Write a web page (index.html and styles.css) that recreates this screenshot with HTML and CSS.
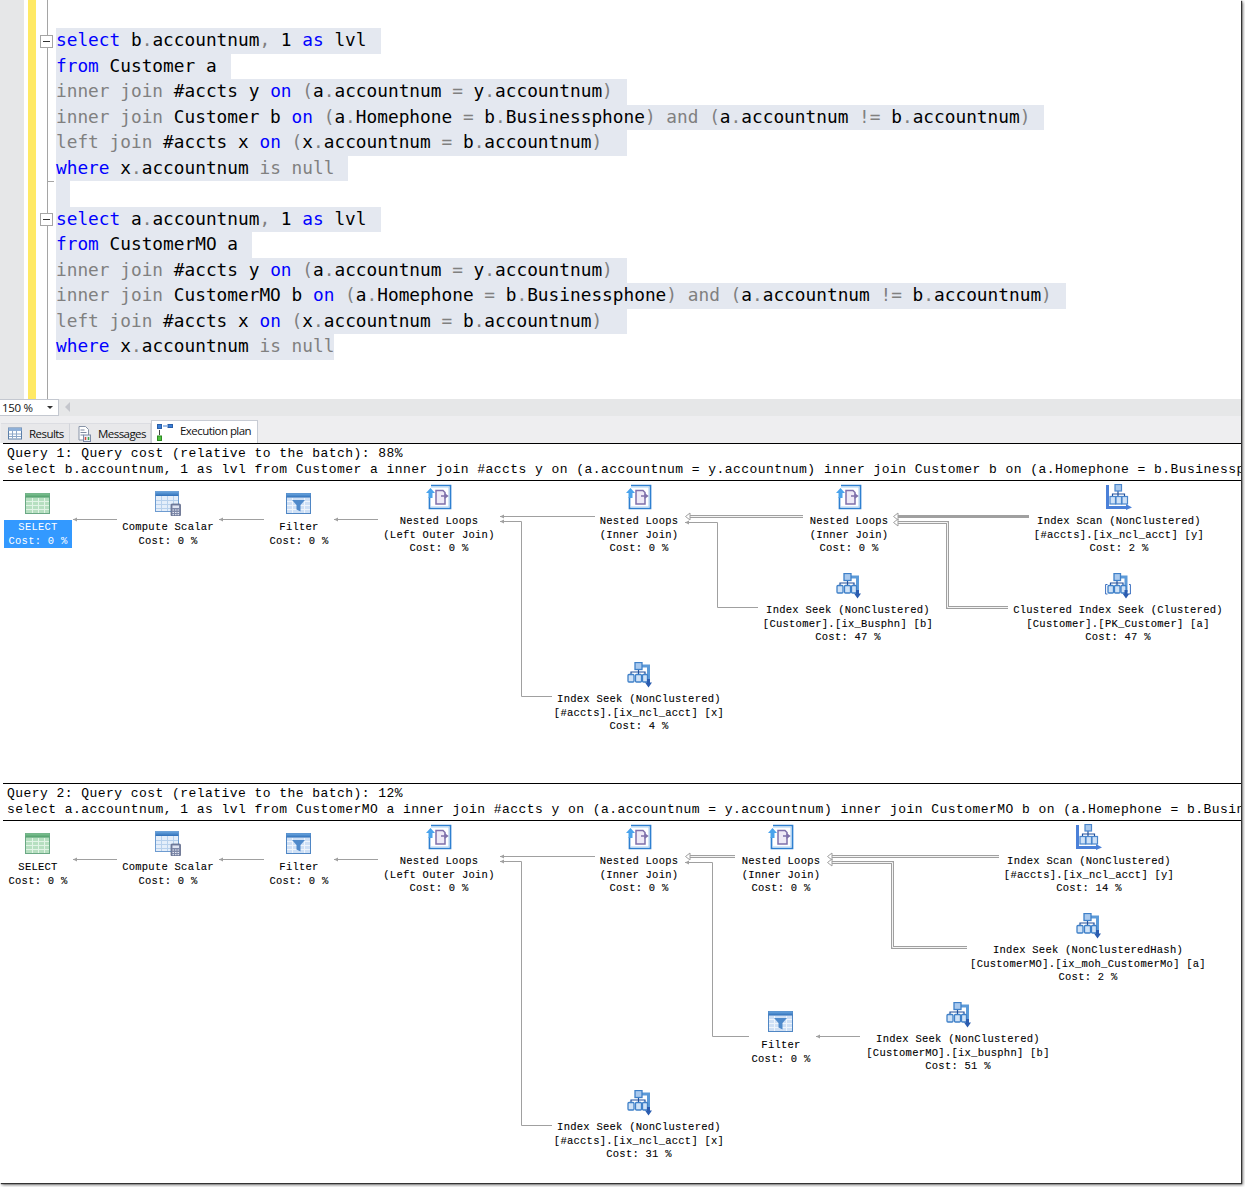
FILE: index.html
```html
<!DOCTYPE html>
<html lang="en">
<head>
<meta charset="utf-8">
<title>Execution plan</title>
<link rel="stylesheet" href="styles.css">
</head>
<body>
<svg class="defs" width="0" height="0" aria-hidden="true">
  <defs>
    <marker id="ah" markerWidth="5" markerHeight="5" refX="0" refY="2.5" orient="0" markerUnits="userSpaceOnUse"><path d="M0 2.500 4 .5V4.500Z" fill="#a0a0a0"/></marker>
    <marker id="aw" markerWidth="7" markerHeight="9" refX="0" refY="4.5" orient="0" markerUnits="userSpaceOnUse"><path d="M.5 4.500 5 1V8Z" fill="#fff" stroke="#a0a0a0"/></marker>
    <linearGradient id="gh" x1="0" y1="0" x2="0" y2="1"><stop offset="0" stop-color="#6aa6e0"/><stop offset="1" stop-color="#2f6fb8"/></linearGradient>
    <linearGradient id="gg" x1="0" y1="0" x2="0" y2="1"><stop offset="0" stop-color="#7fc492"/><stop offset="1" stop-color="#4f9c6b"/></linearGradient>
    <symbol id="i-select" viewBox="0 0 26 26">
      <rect x=".5" y="3.500" width="24" height="20" fill="#b6dfc0" stroke="#6aa884"/>
      <rect x=".5" y="3.500" width="24" height="4" fill="url(#gg)"/>
      <path d="M1 11.500H24M1 15.500H24M1 19.500H24M7.500 8V23M13.500 8V23M19.500 8V23" stroke="#e2f4e6" fill="none"/>
    </symbol>
    <symbol id="i-compute" viewBox="0 0 26 26">
      <rect x=".5" y="1.500" width="23" height="20" fill="#e4eefa" stroke="#6d9bd0"/>
      <rect x=".5" y="1.500" width="23" height="4.500" fill="url(#gh)"/>
      <path d="M1 10.500H23M1 14.500H23M1 18.500H23M6.500 6V21M12.500 6V21M18.500 6V21" stroke="#b7d0ec" fill="none"/>
      <rect x="16" y="14" width="9.500" height="12" rx="1" fill="#7d88a8" stroke="#555f80" stroke-width=".7"/>
      <rect x="17.500" y="15.500" width="6.500" height="2.500" fill="#dfe4f2"/>
      <path d="M17.500 20h1.500M20 20h1.500M22.500 20h1.500M17.500 22.500h1.500M20 22.500h1.500M22.500 22.500h1.500M17.500 24.700h1.500M20 24.700h1.500M22.500 24.700h1.500" stroke="#e8ebf5"/>
    </symbol>
    <symbol id="i-filter" viewBox="0 0 26 26">
      <rect x=".5" y="3.500" width="24" height="20" fill="#cfe0f5" stroke="#4f86c4"/>
      <rect x=".5" y="3.500" width="24" height="4" fill="url(#gh)"/>
      <path d="M1 11.500H24M1 15.500H24M1 19.500H24M6.500 8V23M18.500 8V23" stroke="#eff5fc" fill="none"/>
      <path d="M6 10H19L14.500 15V21.500L10.500 19.500V15Z" fill="#4f8acb"/>
    </symbol>
    <symbol id="i-loops" viewBox="0 0 26 26">
      <path d="M5 1.500H24.500V24.500H3.500V13" fill="#fff" stroke="#2e7fd0" stroke-width="1.700"/>
      <path d="M5 3H23V23H5" fill="none" stroke="#a9cef0"/>
      <path d="M0 9 4.500 4 9 9H6.500V14H2.500V9Z" fill="#4aa3ec"/>
      <path d="M10 6.500H17L19 8.500V20H10Z" fill="#efeaf6" stroke="#7f70aa" stroke-width="1.500"/>
      <path d="M15 12H21M18.500 9.800 21.500 12 18.500 14.200" fill="none" stroke="#7f70aa" stroke-width="1.400"/>
    </symbol>
    <symbol id="i-scan" viewBox="0 0 26 26">
      <path d="M1.500 1V23.500H21" fill="none" stroke="#4a80d8" stroke-width="3"/>
      <path d="M20 20 26 23.500 20 26Z" fill="#4a80d8"/>
      <path d="M12 7V10H6.500V13M12 10H18.500V13M12 10V13" fill="none" stroke="#1f4f9c" stroke-width="1.200"/>
      <rect x="9" y=".5" width="6.500" height="6.500" fill="#a9c9ee" stroke="#4a86cc" stroke-width="1.200"/>
      <rect x="4" y="12.500" width="5.500" height="7.500" fill="#cfe2f7" stroke="#4a86cc" stroke-width="1.200"/>
      <rect x="10" y="12.500" width="5.500" height="7.500" fill="#cfe2f7" stroke="#4a86cc" stroke-width="1.200"/>
      <rect x="16" y="12.500" width="5.500" height="7.500" fill="#cfe2f7" stroke="#4a86cc" stroke-width="1.200"/>
    </symbol>
    <symbol id="i-seek" viewBox="0 0 26 26">
      <path d="M15 4H22.500V19" fill="none" stroke="#5c9ad8" stroke-width="3"/>
      <path d="M12.500 7V10H5V13M12.500 10H19V13M12.500 10V13" fill="none" stroke="#1f4f9c" stroke-width="1.200"/>
      <rect x="9" y=".5" width="7" height="7" fill="#a9c9ee" stroke="#3f80c8" stroke-width="1.300"/>
      <rect x="2" y="12.500" width="6" height="7.500" rx="1" fill="#cfe2f7" stroke="#3f80c8" stroke-width="1.300"/>
      <rect x="9.500" y="12.500" width="6" height="7.500" rx="1" fill="#cfe2f7" stroke="#3f80c8" stroke-width="1.300"/>
      <rect x="16.500" y="12.500" width="5" height="7.500" rx="1" fill="#cfe2f7" stroke="#3f80c8" stroke-width="1.300"/>
      <path d="M21 17H24V20.500H26L22.500 25.500 19 20.500H21Z" fill="#2a5cb0"/>
    </symbol>
    <symbol id="i-cseek" viewBox="0 0 26 26">
      <path d="M2.500 11.500H.6V21H2.500M24 11.500H25.400V21H24" fill="none" stroke="#3b6fc0"/>
      <path d="M15 4H21V19" fill="none" stroke="#5c9ad8" stroke-width="3"/>
      <path d="M12 7V10H5.500V13M12 10H18V13M12 10V13" fill="none" stroke="#1f4f9c" stroke-width="1.200"/>
      <rect x="9" y=".5" width="6.500" height="7" fill="#a9c9ee" stroke="#3f80c8" stroke-width="1.300"/>
      <rect x="3" y="12.500" width="5.500" height="7.500" rx="1" fill="#cfe2f7" stroke="#3f80c8" stroke-width="1.300"/>
      <rect x="9.500" y="12.500" width="5.500" height="7.500" rx="1" fill="#cfe2f7" stroke="#3f80c8" stroke-width="1.300"/>
      <rect x="16" y="12.500" width="5" height="7.500" rx="1" fill="#cfe2f7" stroke="#3f80c8" stroke-width="1.300"/>
      <path d="M19.500 17H22.500V20.500H24.500L21 25.500 17.500 20.500H19.500Z" fill="#2a5cb0"/>
    </symbol>
  </defs>
</svg>

<main class="window">
  <section class="editor">
    <div class="margin"></div>
    <div class="spacer"></div>
    <div class="changes"></div>
    <div class="folds">
      <span class="fold-box fold-a"></span>
      <span class="fold-end"></span>
      <span class="fold-box fold-b"></span>
    </div>
    <div class="code">
      <div class="row"><span class="sel nl"><span class="k">select</span> b<span class="g">.</span>accountnum<span class="g">,</span> 1 <span class="k">as</span> lvl</span></div>
      <div class="row"><span class="sel nl"><span class="k">from</span> Customer a</span></div>
      <div class="row"><span class="sel nl"><span class="g">inner join</span> #accts y <span class="k">on</span> <span class="g">(</span>a<span class="g">.</span>accountnum <span class="g">=</span> y<span class="g">.</span>accountnum<span class="g">)</span></span></div>
      <div class="row"><span class="sel nl"><span class="g">inner join</span> Customer b <span class="k">on</span> <span class="g">(</span>a<span class="g">.</span>Homephone <span class="g">=</span> b<span class="g">.</span>Businessphone<span class="g">) and (</span>a<span class="g">.</span>accountnum <span class="g">!=</span> b<span class="g">.</span>accountnum<span class="g">)</span></span></div>
      <div class="row"><span class="sel nl"><span class="g">left join</span> #accts x <span class="k">on</span> <span class="g">(</span>x<span class="g">.</span>accountnum <span class="g">=</span> b<span class="g">.</span>accountnum<span class="g">) </span></span></div>
      <div class="row"><span class="sel nl"><span class="k">where</span> x<span class="g">.</span>accountnum <span class="g">is null</span></span></div>
      <div class="row"><span class="sel nl"></span></div>
      <div class="row"><span class="sel nl"><span class="k">select</span> a<span class="g">.</span>accountnum<span class="g">,</span> 1 <span class="k">as</span> lvl</span></div>
      <div class="row"><span class="sel nl"><span class="k">from</span> CustomerMO a</span></div>
      <div class="row"><span class="sel nl"><span class="g">inner join</span> #accts y <span class="k">on</span> <span class="g">(</span>a<span class="g">.</span>accountnum <span class="g">=</span> y<span class="g">.</span>accountnum<span class="g">)</span></span></div>
      <div class="row"><span class="sel nl"><span class="g">inner join</span> CustomerMO b <span class="k">on</span> <span class="g">(</span>a<span class="g">.</span>Homephone <span class="g">=</span> b<span class="g">.</span>Businessphone<span class="g">) and (</span>a<span class="g">.</span>accountnum <span class="g">!=</span> b<span class="g">.</span>accountnum<span class="g">)</span></span></div>
      <div class="row"><span class="sel nl"><span class="g">left join</span> #accts x <span class="k">on</span> <span class="g">(</span>x<span class="g">.</span>accountnum <span class="g">=</span> b<span class="g">.</span>accountnum<span class="g">) </span></span></div>
      <div class="row"><span class="sel"><span class="k">where</span> x<span class="g">.</span>accountnum <span class="g">is null</span></span></div>
    </div>
  </section>

  <div class="statusbar">
    <div class="zoom-box"><span>150 %</span><span class="caret"></span></div>
    <span class="scroll-left"></span>
  </div>

  <nav class="tabs">
    <div class="tab tab-results">
      <svg class="tab-icon" viewBox="0 0 14 14"><rect x=".5" y="1.500" width="13" height="11" fill="#fff" stroke="#5c7fa8"/><rect x=".5" y="1.500" width="13" height="3" fill="#8fb0d8"/><path d="M1 7.500H13M1 10H13M4.500 4V12M8.500 4V12" stroke="#8ea8c8"/></svg>
      <span>Results</span>
    </div>
    <div class="tab tab-messages">
      <svg class="tab-icon" viewBox="0 0 14 16"><path d="M1.500.5H8L11 3.500V14H1.500Z" fill="#fff" stroke="#8894a8"/><path d="M3 4H7M3 6.500H9M3 9H6" stroke="#7f8aa0"/><rect x="6" y="9" width="7" height="6.500" fill="#e9edf4" stroke="#7d8aa5"/><path d="M8 11v3" stroke="#d64a3a" stroke-width="1.500"/><path d="M11 11v3" stroke="#3fa34d" stroke-width="1.500"/></svg>
      <span>Messages</span>
    </div>
    <div class="tab tab-plan">
      <svg class="tab-icon plan-icon" viewBox="0 0 16 20"><rect x=".5" y="2.500" width="4" height="4" fill="#3a7fd8" stroke="#2a5fa8"/><rect x="11" y="2.500" width="4.500" height="3" fill="#3a7fd8" stroke="#2a5fa8"/><path d="M6 4H10" stroke="#3a7fd8"/><path d="M2.500 8V13" stroke="#444"/><rect x=".5" y="14" width="4" height="4.500" fill="#4fc23e" stroke="#2f8a25"/></svg>
      <span>Execution plan</span>
    </div>
  </nav>

  <section class="plan">
    <header class="plan-head">
      <div>Query 1: Query cost (relative to the batch): 88%</div>
      <div>select b.accountnum, 1 as lvl from Customer a inner join #accts y on (a.accountnum = y.accountnum) inner join Customer b on (a.Homephone = b.Businessphone) and (a.accountnum != b.accountnum) left join #accts x on (x.accountnum = b.accountnum) where x.accountnum is null</div>
    </header>
    <div class="canvas canvas-one">
      <svg class="wires" viewBox="0 481 1241 302">
        <path class="wire" marker-start="url(#ah)" d="M73 519.500H117"/>
        <path class="wire" marker-start="url(#ah)" d="M219 519.500H264"/>
        <path class="wire" marker-start="url(#ah)" d="M334 519.500H378"/>
        <path class="wire" marker-start="url(#ah)" d="M500 516.500H595"/>
        <path class="wire" marker-start="url(#ah)" d="M500 521.500H521.500V696.500H552"/>
        <path class="wire wider" d="M689 516.500H803"/>
        <path class="wire inner" d="M689 516.500H803"/>
        <path class="wire arrow-only" marker-start="url(#aw)" d="M685 516.500H690"/>
        <path class="wire" marker-start="url(#ah)" d="M685 522.500H717.500V607.500H758"/>
        <path class="wire wider" d="M897 516.500H1029"/>
        <path class="wire arrow-only" marker-start="url(#aw)" d="M893 516.500H898"/>
        <path class="wire wider" d="M897 522.500H947.500V607.500H1008"/>
        <path class="wire inner" d="M897 522.500H947.500V607.500H1008"/>
        <path class="wire arrow-only" marker-start="url(#aw)" d="M893 522.500H898"/>
      </svg>
      <div class="node x38 a9"><svg class="ico"><use href="#i-select"/></svg><div class="label picked">SELECT<br>Cost: 0 %</div></div>
      <div class="node x168 a9"><svg class="ico"><use href="#i-compute"/></svg><div class="label">Compute Scalar<br>Cost: 0 %</div></div>
      <div class="node x299 a9"><svg class="ico"><use href="#i-filter"/></svg><div class="label">Filter<br>Cost: 0 %</div></div>
      <div class="node x439 a3"><svg class="ico"><use href="#i-loops"/></svg><div class="label">Nested Loops<br>(Left Outer Join)<br>Cost: 0 %</div></div>
      <div class="node x639 a3"><svg class="ico"><use href="#i-loops"/></svg><div class="label">Nested Loops<br>(Inner Join)<br>Cost: 0 %</div></div>
      <div class="node x849 a3"><svg class="ico"><use href="#i-loops"/></svg><div class="label">Nested Loops<br>(Inner Join)<br>Cost: 0 %</div></div>
      <div class="node x1119 a3"><svg class="ico"><use href="#i-scan"/></svg><div class="label">Index Scan (NonClustered)<br>[#accts].[ix_ncl_acct] [y]<br>Cost: 2 %</div></div>
      <div class="node x848 a92"><svg class="ico"><use href="#i-seek"/></svg><div class="label">Index Seek (NonClustered)<br>[Customer].[ix_Busphn] [b]<br>Cost: 47 %</div></div>
      <div class="node x1118 a92"><svg class="ico"><use href="#i-cseek"/></svg><div class="label">Clustered Index Seek (Clustered)<br>[Customer].[PK_Customer] [a]<br>Cost: 47 %</div></div>
      <div class="node x639 a181"><svg class="ico"><use href="#i-seek"/></svg><div class="label">Index Seek (NonClustered)<br>[#accts].[ix_ncl_acct] [x]<br>Cost: 4 %</div></div>
    </div>
  </section>

  <section class="plan">
    <header class="plan-head">
      <div>Query 2: Query cost (relative to the batch): 12%</div>
      <div>select a.accountnum, 1 as lvl from CustomerMO a inner join #accts y on (a.accountnum = y.accountnum) inner join CustomerMO b on (a.Homephone = b.Businessphone) and (a.accountnum != b.accountnum) left join #accts x on (x.accountnum = b.accountnum) where x.accountnum is null</div>
    </header>
    <div class="canvas canvas-two">
      <svg class="wires" viewBox="0 821 1241 362">
        <path class="wire" marker-start="url(#ah)" d="M73 859.500H117"/>
        <path class="wire" marker-start="url(#ah)" d="M219 859.500H264"/>
        <path class="wire" marker-start="url(#ah)" d="M334 859.500H378"/>
        <path class="wire" marker-start="url(#ah)" d="M500 856.500H595"/>
        <path class="wire" marker-start="url(#ah)" d="M500 861.500H521.500V1125.500H552"/>
        <path class="wire wider" d="M689 856.500H735"/>
        <path class="wire inner" d="M689 856.500H735"/>
        <path class="wire arrow-only" marker-start="url(#aw)" d="M685 856.500H690"/>
        <path class="wire" marker-start="url(#ah)" d="M685 862.500H712.500V1036.500H749"/>
        <path class="wire wider" d="M831 856.500H999"/>
        <path class="wire inner" d="M831 856.500H999"/>
        <path class="wire arrow-only" marker-start="url(#aw)" d="M827 856.500H832"/>
        <path class="wire wider" d="M831 862.500H892.500V947.500H967"/>
        <path class="wire inner" d="M831 862.500H892.500V947.500H967"/>
        <path class="wire arrow-only" marker-start="url(#aw)" d="M827 862.500H832"/>
        <path class="wire" marker-start="url(#ah)" d="M816 1036.500H860"/>
      </svg>
      <div class="node x38 a9"><svg class="ico"><use href="#i-select"/></svg><div class="label">SELECT<br>Cost: 0 %</div></div>
      <div class="node x168 a9"><svg class="ico"><use href="#i-compute"/></svg><div class="label">Compute Scalar<br>Cost: 0 %</div></div>
      <div class="node x299 a9"><svg class="ico"><use href="#i-filter"/></svg><div class="label">Filter<br>Cost: 0 %</div></div>
      <div class="node x439 a3"><svg class="ico"><use href="#i-loops"/></svg><div class="label">Nested Loops<br>(Left Outer Join)<br>Cost: 0 %</div></div>
      <div class="node x639 a3"><svg class="ico"><use href="#i-loops"/></svg><div class="label">Nested Loops<br>(Inner Join)<br>Cost: 0 %</div></div>
      <div class="node x781 a3"><svg class="ico"><use href="#i-loops"/></svg><div class="label">Nested Loops<br>(Inner Join)<br>Cost: 0 %</div></div>
      <div class="node x1089 a3"><svg class="ico"><use href="#i-scan"/></svg><div class="label">Index Scan (NonClustered)<br>[#accts].[ix_ncl_acct] [y]<br>Cost: 14 %</div></div>
      <div class="node x1088 a92"><svg class="ico"><use href="#i-seek"/></svg><div class="label">Index Seek (NonClusteredHash)<br>[CustomerMO].[ix_moh_CustomerMo] [a]<br>Cost: 2 %</div></div>
      <div class="node x781 a187"><svg class="ico"><use href="#i-filter"/></svg><div class="label">Filter<br>Cost: 0 %</div></div>
      <div class="node x958 a181"><svg class="ico"><use href="#i-seek"/></svg><div class="label">Index Seek (NonClustered)<br>[CustomerMO].[ix_busphn] [b]<br>Cost: 51 %</div></div>
      <div class="node x639 a269"><svg class="ico"><use href="#i-seek"/></svg><div class="label">Index Seek (NonClustered)<br>[#accts].[ix_ncl_acct] [x]<br>Cost: 31 %</div></div>
    </div>
  </section>
</main>
</body>
</html>
```
FILE: styles.css
```css
* { box-sizing: border-box; }
html, body { margin: 0; padding: 0; background: #fff; }
body { width: 1245px; height: 1187px; overflow: hidden; position: relative; }
.defs { position: absolute; }

.window {
  width: 1241px;
  height: 1183px;
  background: #fff;
  overflow: hidden;
  box-shadow: 1px 1px 1px #333, 2px 2px 3px #777;
  display: flex;
  flex-direction: column;
}

/* SQL editor */
.editor { height: 399px; display: flex; flex: none; overflow: hidden; }
.margin { width: 24px; background: #e6e7e8; }
.spacer { width: 4px; background: #fff; }
.changes { width: 8px; background: #ffe964; }
.folds { width: 20px; position: relative; }
.folds::before { content: ""; position: absolute; left: 11px; top: 0; bottom: 0; width: 1px; background: #a5a5a5; }
.fold-box { position: absolute; left: 4px; width: 13px; height: 13px; background: #fff; border: 1px solid #a5a5a5; }
.fold-box::after { content: ""; position: absolute; left: 2px; right: 2px; top: 5px; height: 1px; background: #333; }
.fold-a { top: 35px; }
.fold-b { top: 213px; }
.fold-end { position: absolute; left: 11px; top: 181px; width: 7px; height: 1px; background: #a5a5a5; }
.code {
  padding-top: 28px;
  font-family: "DejaVu Sans Mono", "Liberation Mono", monospace;
  font-size: 17.800px;
  color: #000;
}
.row { height: 25.500px; line-height: 23.500px; white-space: pre; }
.sel { display: inline-block; height: 25.500px; min-width: 1px; background: #e4e8f0; vertical-align: top; }
.nl { padding-right: 14px; }
.k { color: #0000ff; }
.g { color: #808080; }

/* zoom bar */
.statusbar { height: 17px; flex: none; background: #e6e7e8; display: flex; align-items: stretch; }
.zoom-box {
  width: 59px;
  background: #fff;
  border: 1px solid #c4c8d0;
  border-left: 0;
  display: flex;
  align-items: center;
  justify-content: space-between;
  padding: 0 5px 0 2px;
  font: 11.500px/15px "Open Sans", "Liberation Sans", sans-serif;
  letter-spacing: -.3px;
  color: #111;
}
.caret { width: 0; height: 0; border: 3px solid transparent; border-top: 3px solid #333; border-bottom: 0; }
.scroll-left { width: 0; height: 0; margin: 3px 0 0 6px; border: 5px solid transparent; border-right: 5px solid #c4c6cc; border-left: 0; }

/* result tabs */
.tabs {
  height: 27px;
  flex: none;
  background: #eeeef0;
  display: flex;
  align-items: flex-end;
  padding-left: 1px;
  font: 11.500px/16px "Open Sans", "Liberation Sans", sans-serif;
  letter-spacing: -.55px;
  color: #111;
}
.tab { display: flex; align-items: center; height: 20px; background: #e8e8ea; border-right: 1px solid #d2d4da; border-top: 1px solid #dcdde2; }
.tab-results { width: 69px; padding-left: 7px; gap: 7px; }
.tab-messages { width: 81px; padding-left: 7px; gap: 6px; }
.tab-plan { width: 107px; height: 23px; padding: 0 0 3px 5px; gap: 7px; background: #fff; border: 1px solid #c8ccd4; border-bottom: 0; }
.tab-icon { width: 14px; height: 15px; flex: none; }
.tab-messages .tab-icon { height: 16px; width: 15px; }
.plan-icon { width: 16px; height: 20px; margin-top: 2px; }

/* plan panels */
.plan { flex: none; }
.plan-head {
  margin-left: 3px;
  height: 38px;
  padding: 2px 0 0 4px;
  border-top: 1px solid #000;
  border-bottom: 1px solid #000;
  font: 13px/16px "Liberation Mono", "Courier New", monospace;
  letter-spacing: .45px;
  color: #000;
  white-space: nowrap;
  overflow: hidden;
}
.canvas { position: relative; overflow: hidden; }
.canvas-one { height: 302px; }
.canvas-two { height: 362px; }
.wires { position: absolute; left: 0; top: 0; width: 1241px; height: 100%; }
.wire { fill: none; stroke: #a0a0a0; stroke-width: 1; }
.wider { stroke-width: 3; }
.inner { stroke: #f4f4f4; }
.arrow-only { stroke: none; }

.node {
  position: absolute;
  width: 300px;
  margin-left: -150px;
  display: flex;
  flex-direction: column;
  align-items: center;
  gap: 5px;
}
.ico { width: 26px; height: 26px; display: block; }
.label {
  font: 10.500px/13.500px "Liberation Mono", "Courier New", monospace;
  letter-spacing: .25px;
  -webkit-text-stroke: .1px #000;
  color: #000;
  text-align: center;
  white-space: nowrap;
}
.picked { background: #3399ff; color: #fff; -webkit-text-stroke: 0; width: 68px; margin-top: -1px; padding-top: 1px; }

.x38 { left: 38px; }
.x168 { left: 168px; }
.x299 { left: 299px; }
.x439 { left: 439px; }
.x639 { left: 639px; }
.x781 { left: 781px; }
.x848 { left: 848px; }
.x849 { left: 849px; }
.x958 { left: 958px; }
.x1088 { left: 1088px; }
.x1089 { left: 1089px; }
.x1118 { left: 1118px; }
.x1119 { left: 1119px; }
.a3 { top: 3px; }
.a9 { top: 9px; }
.a92 { top: 92px; }
.a181 { top: 181px; }
.a187 { top: 187px; }
.a269 { top: 269px; }
```
